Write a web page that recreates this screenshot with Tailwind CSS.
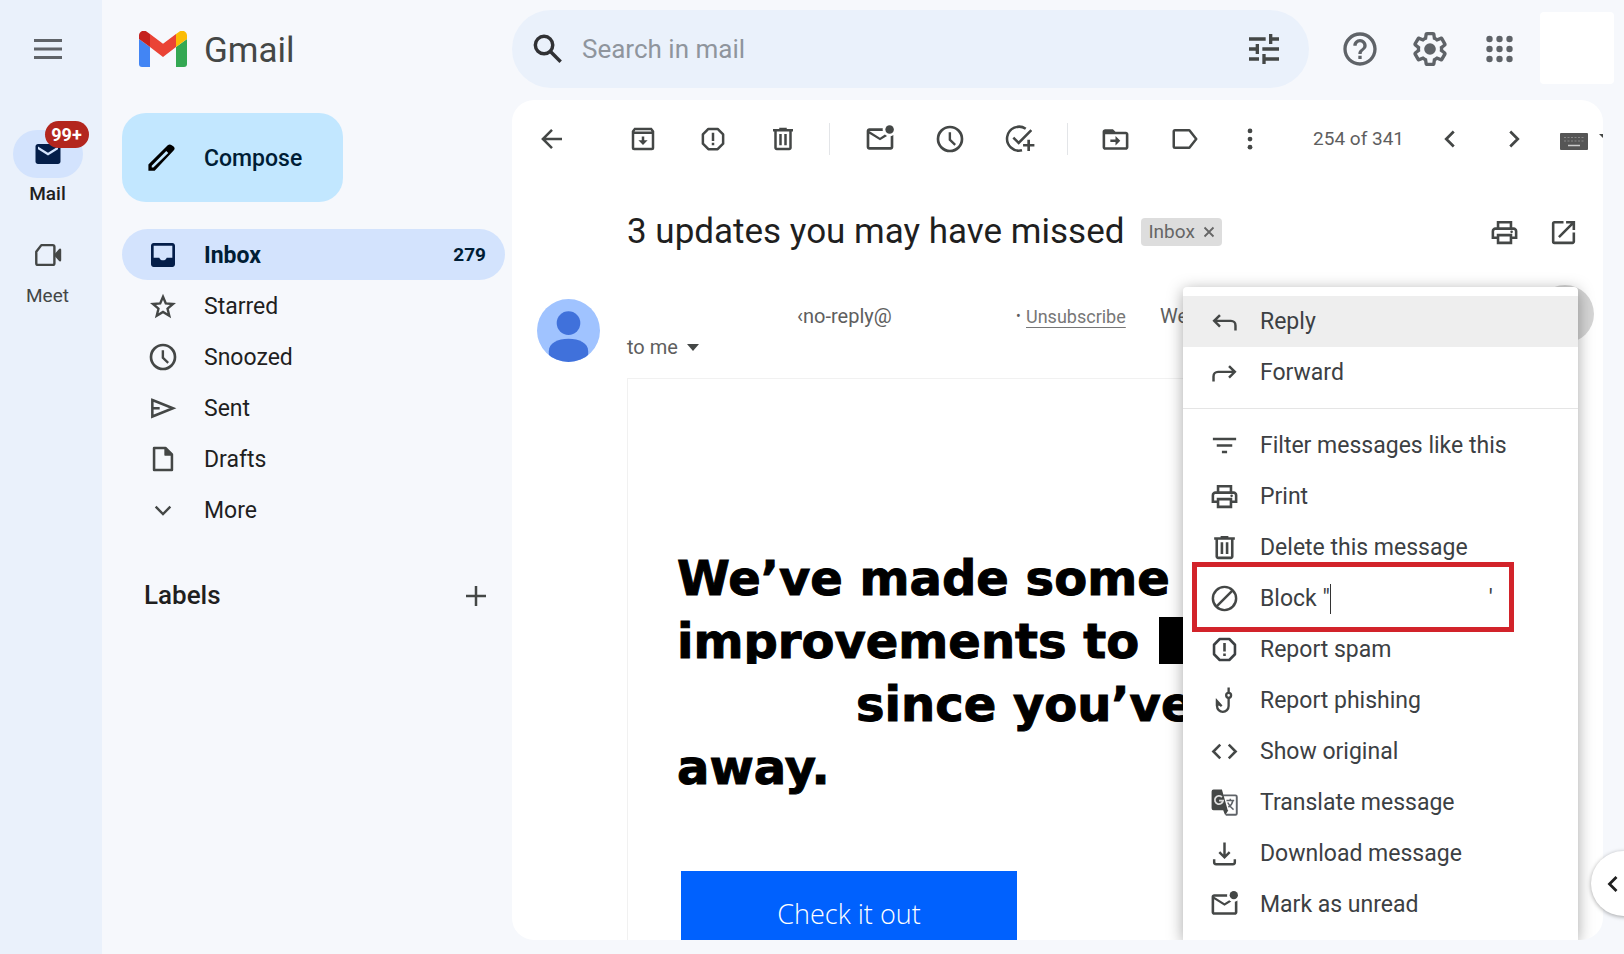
<!DOCTYPE html>
<html lang="en">
<head>
  <meta charset="UTF-8" />
  <meta name="viewport" content="width=device-width, initial-scale=1.0" />
  <title>Gmail</title>
  <script src="https://cdn.jsdelivr.net/npm/@tailwindcss/browser@4"></script>
</head>
<body class="bg-[#f6f8fc] font-['Roboto',sans-serif] text-[#444746]">

  <!-- shared icons -->
  <svg class="hidden">
    <symbol id="unread" viewBox="0 0 24 24"><path d="M22 8.98V18c0 1.1-.9 2-2 2H4c-1.1 0-2-.9-2-2V6c0-1.100.9-2 2-2h10.100A5 5 0 0 0 14.100 6H4l8 5 3.670-2.290c.47.43 1.020.76 1.630.98L12 13 4 8v10h16V9.900c.74-.15 1.420-.48 2-.92z"/><circle cx="19.200" cy="4.800" r="3.200"/></symbol>
    <symbol id="clock" viewBox="0 0 24 24"><path d="M12 2a10 10 0 1 0 0 20 10 10 0 0 0 0-20zm0 18a8 8 0 1 1 0-16 8 8 0 0 1 0 16zM12.800 7H11v6l4.300 4 1.200-1.300-3.700-3.500z"/></symbol>
    <symbol id="spam" viewBox="0 0 24 24"><path d="M8.300 3.900h7.400l4.400 4.400v7.400l-4.400 4.400H8.300l-4.400-4.400V8.300z" fill="none" stroke="currentColor" stroke-width="2" stroke-linejoin="round"/><path d="M11 7h2v6.500h-2zM11 15h2v2h-2z"/></symbol>
    <symbol id="trash" viewBox="0 0 24 24"><path d="M15 4V3H9v1H4v2h1v13c0 1.100.9 2 2 2h10c1.100 0 2-.9 2-2V6h1V4h-5zm2 15H7V6h10v13zM9 8h2v9H9zm4 0h2v9h-2z"/></symbol>
    <symbol id="print" viewBox="0 0 24 24"><path d="M19 8h-1V3H6v5H5c-1.660 0-3 1.340-3 3v6h4v4h12v-4h4v-6c0-1.660-1.340-3-3-3zM8 5h8v3H8V5zm8 14H8v-4h8v4zm2-4v-2H6v2H4v-4c0-.55.45-1 1-1h14c.55 0 1 .45 1 1v4h-2z"/><circle cx="17.500" cy="11.500" r="1"/></symbol>
  </svg>

  <div class="flex h-screen overflow-hidden relative">

    <nav class="w-[102px] shrink-0 bg-[#eaf1fb] flex flex-col items-center pr-[7px]" aria-label="Apps">
      <button class="h-[98px] flex items-center" aria-label="Main menu">
        <svg class="w-7 h-5" viewBox="0 0 28 20" fill="#5f6368"><path d="M0 0h28v3H0zM0 8.500h28v3H0zM0 17h28v3H0z"/></svg>
      </button>
      <a href="#mail" class="mt-8 relative flex flex-col items-center text-[#1f1f1f] text-[19px] font-medium leading-8">
        <span class="w-[70px] h-12 rounded-full bg-[#d3e3fd] flex items-center justify-center">
          <svg class="w-[30px] h-[30px]" viewBox="0 0 24 24" fill="#041e49"><path d="M20 4H4c-1.100 0-2 .9-2 2v12c0 1.100.9 2 2 2h16c1.100 0 2-.9 2-2V6c0-1.100-.9-2-2-2zm0 4.200-8 5-8-5V6l8 5 8-5z"/></svg>
        </span>
        <span class="absolute left-8 -top-[9px] h-[27px] w-11 rounded-full bg-[#b3261e] text-white text-[18px] font-bold leading-[27px] text-center">99+</span>
        Mail
      </a>
      <a href="#meet" class="mt-[29px] flex flex-col items-center text-[19px] leading-8">
        <svg class="w-[32px] h-[32px] mb-[9px]" viewBox="0 0 24 24" fill="none" stroke="#444746" stroke-width="1.800" stroke-linejoin="round"><path d="M3.200 9.500 7 4.600h8.500a1.300 1.300 0 0 1 1.300 1.300v12.200a1.300 1.300 0 0 1-1.300 1.300h-11a1.300 1.300 0 0 1-1.300-1.300z"/><path d="m17.500 12 3.500-4v8z" fill="#444746"/></svg>
        <span>Meet</span>
      </a>
    </nav>

    <aside class="w-[410px] shrink-0 pl-5 pr-[7px]">
      <div class="h-[98px] flex items-center pl-[17px]">
        <svg class="w-12 h-9" viewBox="0 0 48 36"><path fill="#4285f4" d="M0 8v25a3 3 0 0 0 3 3h8V16z"/><path fill="#34a853" d="M37 16v20h8a3 3 0 0 0 3-3V8z"/><path fill="#ea4335" d="M11 16V3l13 9.800L37 3v13L24 26z"/><path fill="#fbbc04" d="M37 3v13l11-8V4.500C48 .5 43.500-1.700 40.200.7z"/><path fill="#c5221f" d="M11 3v13L0 8V4.500C0 .5 4.500-1.700 7.800.7z"/></svg>
        <span class="ml-[17px] pt-1 text-[35px] text-[#444746]">Gmail</span>
      </div>
      <button class="mt-[15px] w-[221px] h-[89px] rounded-[24px] bg-[#c2e7ff] flex items-center pl-6 text-[23px] font-medium text-[#001d35]">
        <svg class="w-8 h-8" viewBox="0 0 24 24" fill="#000"><path fill-rule="evenodd" d="M20.700 3.300a2.200 2.200 0 0 1 0 3.100L6.500 21.500H1.800v-4.700L16.300 2.500a2.200 2.200 0 0 1 3 0zM4.300 17.900v1.200h1.200L16.700 8.200l-1.500-1.500z"/></svg>
        <span class="ml-[26px] pt-1">Compose</span>
      </button>

      <nav class="mt-[27px] text-[23px] text-[#1f1f1f]" aria-label="Folders">
        <a href="#inbox" class="h-[51px] rounded-full bg-[#d3e3fd] flex items-center pl-[25px] pr-[19px] font-bold text-[#001d35]">
          <svg class="w-8 h-8" viewBox="0 0 24 24" fill="#041e49"><path d="M19 3H5c-1.100 0-2 .9-2 2v14c0 1.100.9 2 2 2h14c1.100 0 2-.9 2-2V5c0-1.100-.9-2-2-2zm0 11h-4.200c-.4 1.200-1.500 2-2.800 2s-2.400-.8-2.800-2H5V5h14z"/></svg>
          <span class="ml-[25px] pt-[3px]">Inbox</span>
          <span class="ml-auto pt-px text-[19px]">279</span>
        </a>
        <a href="#starred" class="h-[51px] flex items-center pl-[25px]">
          <svg class="w-8 h-8" viewBox="0 0 24 24" fill="none" stroke="#444746" stroke-width="1.800"><path d="m12 5.100 2.100 5 5.400.4-4.100 3.500 1.300 5.300-4.700-2.900-4.700 2.900 1.300-5.300-4.100-3.500 5.400-.4z"/></svg>
          <span class="ml-[25px] pt-[3px]">Starred</span>
        </a>
        <a href="#snoozed" class="h-[51px] flex items-center pl-[25px]">
          <svg class="w-8 h-8" fill="#444746"><use href="#clock"/></svg>
          <span class="ml-[25px] pt-[3px]">Snoozed</span>
        </a>
        <a href="#sent" class="h-[51px] flex items-center pl-[25px]">
          <svg class="w-8 h-8" viewBox="0 0 24 24" fill="none" stroke="#444746" stroke-width="1.900"><path d="M4 6 19.500 12.200 4 18.400z"/><path d="M4 12.200h5.500"/></svg>
          <span class="ml-[25px] pt-[3px]">Sent</span>
        </a>
        <a href="#drafts" class="h-[51px] flex items-center pl-[25px]">
          <svg class="w-8 h-8" viewBox="0 0 24 24" fill="none" stroke="#444746" stroke-width="1.900" stroke-linejoin="round"><path d="M5.300 3.700h8.500l4.900 4.900v11.700H5.300z"/><path d="M13.500 4v5h5z" fill="#444746" stroke-width="1"/></svg>
          <span class="ml-[25px] pt-[3px]">Drafts</span>
        </a>
        <button class="h-[51px] flex items-center pl-[25px]">
          <svg class="w-8 h-8" viewBox="0 0 24 24" fill="none" stroke="#444746" stroke-width="1.800"><path d="m6.500 9.500 5.500 5.500 5.500-5.500"/></svg>
          <span class="ml-[25px] pt-[3px]">More</span>
        </button>
      </nav>

      <div class="mt-[41px] flex items-center justify-between pl-[22px] pr-[13px]">
        <h2 class="text-[26px] font-medium text-[#1f1f1f]">Labels</h2>
        <button aria-label="Create new label">
          <svg class="w-8 h-8" viewBox="0 0 32 32" fill="none" stroke="#444746" stroke-width="2.500"><path d="M16 6v20M6 16h20"/></svg>
        </button>
      </div>
    </aside>

    <div class="flex-1 min-w-0 flex flex-col">
      <header class="h-[100px] shrink-0 flex items-start pt-[10px] pr-[10px]">
        <form class="flex-1 h-[78px] rounded-full bg-[#eaf1fb] flex items-center pl-[17px] pr-[25px]">
          <button type="button" aria-label="Search">
            <svg class="w-[38px] h-[38px]" viewBox="0 0 24 24" fill="none" stroke="#303134" stroke-width="2.200"><circle cx="9.500" cy="9.500" r="5.500"/><path d="m13.700 13.700 6.300 6.300"/></svg>
          </button>
          <input type="text" aria-label="Search in mail" placeholder="Search in mail" class="ml-[15px] flex-1 min-w-0 bg-transparent text-[26px] outline-none placeholder:text-[#8f959d]" />
          <button type="button" aria-label="Show search options">
            <svg class="w-10 h-10" viewBox="0 0 24 24" fill="#444746"><path d="M3 17v2h6v-2H3zM3 5v2h10V5H3zm10 16v-2h8v-2h-8v-2h-2v6h2zM7 9v2H3v2h4v2h2V9H7zm14 4v-2H11v2h10zm-6-4h2V7h4V5h-4V3h-2v6z"/></svg>
          </button>
        </form>
        <div class="ml-4 h-[78px] flex items-center">
          <button class="w-[70px] flex justify-center" aria-label="Support">
            <svg class="w-10 h-10" viewBox="0 0 24 24" fill="#5f6368"><path d="M11 18h2v-2h-2v2zm1-16C6.480 2 2 6.480 2 12s4.480 10 10 10 10-4.480 10-10S17.520 2 12 2zm0 18c-4.410 0-8-3.590-8-8s3.590-8 8-8 8 3.590 8 8-3.590 8-8 8zm0-14c-2.210 0-4 1.790-4 4h2c0-1.100.9-2 2-2s2 .9 2 2c0 2-3 1.750-3 5h2c0-2.250 3-2.500 3-5 0-2.210-1.790-4-4-4z"/></svg>
          </button>
          <button class="w-[70px] flex justify-center" aria-label="Settings">
            <svg class="w-10 h-10" viewBox="0 0 24 24" fill="#5f6368"><path d="M13.850 22.250h-3.700c-.74 0-1.360-.54-1.450-1.270l-.27-1.890c-.27-.14-.53-.29-.79-.46l-1.800.72c-.7.26-1.470-.03-1.810-.65L2.200 15.530c-.35-.66-.2-1.440.36-1.880l1.530-1.190c-.01-.15-.02-.3-.02-.46 0-.15.01-.31.02-.46l-1.520-1.190c-.59-.45-.74-1.260-.37-1.880l1.850-3.190c.34-.62 1.110-.9 1.790-.63l1.810.73c.26-.17.52-.32.78-.46l.27-1.910c.09-.7.71-1.250 1.440-1.250h3.700c.74 0 1.360.54 1.450 1.270l.27 1.890c.27.14.53.29.79.46l1.800-.72c.71-.26 1.480.03 1.820.65l1.840 3.180c.36.66.2 1.440-.36 1.880l-1.520 1.190c.01.15.02.3.02.46s-.01.31-.02.46l1.520 1.190c.56.45.72 1.230.37 1.860l-1.860 3.220c-.34.620-1.110.9-1.800.630l-1.800-.72c-.26.170-.52.320-.78.460l-.27 1.910c-.1.680-.72 1.220-1.460 1.220zm-3.230-2h2.760l.37-2.550.53-.22c.44-.18.880-.44 1.340-.78l.45-.34 2.380.96 1.380-2.400-2.030-1.580.070-.56c.03-.26.06-.51.06-.78s-.03-.53-.06-.78l-.07-.56 2.030-1.580-1.390-2.400-2.390.96-.45-.35c-.42-.32-.87-.58-1.330-.77l-.52-.22-.37-2.550h-2.760l-.37 2.550-.53.210c-.44.190-.88.440-1.340.790l-.45.330-2.380-.95-1.390 2.390 2.030 1.580-.07.560a7 7 0 0 0-.06.790c0 .26.020.530.060.780l.07.560-2.030 1.580 1.380 2.400 2.390-.96.45.350c.43.330.860.580 1.330.770l.53.220.38 2.550z"/><circle cx="12" cy="12" r="3.500"/></svg>
          </button>
          <button class="w-[70px] flex justify-center" aria-label="Google apps">
            <svg class="w-10 h-10" viewBox="0 0 40 40" fill="#5f6368"><circle cx="9.500" cy="10" r="3.200"/><circle cx="19.500" cy="10" r="3.200"/><circle cx="29.500" cy="10" r="3.200"/><circle cx="9.500" cy="20" r="3.200"/><circle cx="19.500" cy="20" r="3.200"/><circle cx="29.500" cy="20" r="3.200"/><circle cx="9.500" cy="30" r="3.200"/><circle cx="19.500" cy="30" r="3.200"/><circle cx="29.500" cy="30" r="3.200"/></svg>
          </button>
        </div>
        <div class="ml-[5px] mt-[2px] w-[74px] h-[72px] rounded-sm bg-white"></div>
      </header>

      <main class="relative flex-1 min-h-0 mr-[21px] mb-[14px] rounded-[22px] bg-white overflow-hidden">

        <!-- toolbar -->
        <div class="h-[78px] flex items-center">
          <button class="w-20 flex justify-center mr-4" aria-label="Back to Inbox">
            <svg class="w-[30px] h-[30px]" viewBox="0 0 24 24" fill="none" stroke="#444746" stroke-width="2"><path d="M20 12H5.500M12 4.700 4.700 12l7.300 7.300"/></svg>
          </button>
          <button class="w-[70px] flex justify-center" aria-label="Archive">
            <svg class="w-[30px] h-[30px]" viewBox="0 0 24 24" fill="#444746"><path fill-rule="evenodd" d="M5 3h14l2 2.500V19a2 2 0 0 1-2 2H5a2 2 0 0 1-2-2V5.500zM5 8v11h14V8zM5.800 5l-.6 1h13.600l-.6-1z"/><path d="M11 10h2v3h2.700L12 16.700 8.300 13H11z"/></svg>
          </button>
          <button class="w-[70px] flex justify-center" aria-label="Report spam"><svg class="w-[30px] h-[30px]" fill="#444746"><use href="#spam"/></svg></button>
          <button class="w-[70px] flex justify-center" aria-label="Delete"><svg class="w-[30px] h-[30px]" fill="#444746"><use href="#trash"/></svg></button>
          <div class="ml-[11px] mr-[15px] w-px h-8 bg-[#e3e5e8]"></div>
          <button class="w-[70px] flex justify-center" aria-label="Mark as unread"><svg class="w-[32px] h-[32px]" fill="#444746"><use href="#unread"/></svg></button>
          <button class="w-[70px] flex justify-center" aria-label="Snooze"><svg class="w-[32px] h-[32px]" fill="#444746"><use href="#clock"/></svg></button>
          <button class="w-[70px] flex justify-center" aria-label="Add to Tasks">
            <svg class="w-[32px] h-[32px]" viewBox="0 0 24 24" fill="none" stroke="#444746" stroke-width="1.900"><path d="M16.300 4.300A9 9 0 1 0 13.500 20.500"/><path d="m7 11 4 4L20.500 5.300"/><path d="M18.500 12.500v8.500M14.300 16.700h8.500" stroke-width="2"/></svg>
          </button>
          <div class="mx-3 w-px h-8 bg-[#e3e5e8]"></div>
          <button class="w-[70px] flex justify-center" aria-label="Move to">
            <svg class="w-[31px] h-[31px]" viewBox="0 0 24 24" fill="#444746"><path fill-rule="evenodd" d="M20 6h-8l-2-2H4c-1.100 0-2 .9-2 2v12c0 1.100.9 2 2 2h16c1.100 0 2-.9 2-2V8c0-1.100-.9-2-2-2zm0 12H4V8h16z"/><path d="M12 9.300 15.700 13 12 16.700V14H8v-2h4z"/></svg>
          </button>
          <button class="w-[70px] flex justify-center" aria-label="Labels">
            <svg class="w-[30px] h-[30px]" viewBox="0 0 24 24" fill="none" stroke="#444746" stroke-width="2" stroke-linejoin="round"><path d="M4 5h11.500l5.500 7-5.500 7H4a1 1 0 0 1-1-1V6a1 1 0 0 1 1-1z"/></svg>
          </button>
          <button class="w-[60px] flex justify-center" aria-label="More">
            <svg class="w-[30px] h-[30px]" viewBox="0 0 24 24" fill="#444746"><circle cx="12" cy="5.500" r="1.900"/><circle cx="12" cy="12" r="1.900"/><circle cx="12" cy="18.500" r="1.900"/></svg>
          </button>
          <span class="ml-auto mr-[14px] text-[19px] text-[#5e5e5e] whitespace-nowrap">254 of 341</span>
          <button class="w-16 flex justify-center" aria-label="Newer">
            <svg class="w-[30px] h-[30px]" viewBox="0 0 24 24" fill="none" stroke="#444746" stroke-width="2.200"><path d="m15 6-6 6 6 6"/></svg>
          </button>
          <button class="w-16 flex justify-center" aria-label="Older">
            <svg class="w-[30px] h-[30px]" viewBox="0 0 24 24" fill="none" stroke="#444746" stroke-width="2.200"><path d="m9 6 6 6-6 6"/></svg>
          </button>
          <button class="w-[57px] pl-[14px] overflow-hidden" aria-label="Select input tool">
            <svg class="w-[50px] h-[22px] mt-1" viewBox="0 0 50 22" fill="#555"><rect y="3" width="28" height="17" rx="1"/><path d="M4 7.500h20M4 11h20" stroke="#888" stroke-width="1.200" stroke-dasharray="2 1.500"/><path d="M8 15.500h12" stroke="#ccc" stroke-width="1.300"/><path d="M39 4h10l-5 5z" fill="#444746"/></svg>
          </button>
        </div>

        <!-- subject -->
        <div class="h-[106px] pt-[2px] flex items-center pl-[115px] pr-[10px]">
          <h1 class="text-[35px] text-[#1f1f1f] whitespace-nowrap">3 updates you may have missed</h1>
          <button class="ml-[17px] h-7 px-[7px] rounded bg-[#ddd] text-[19px] text-[#666] flex items-center gap-2" aria-label="Remove label Inbox">
            Inbox
            <svg class="w-3 h-3" viewBox="0 0 12 12" stroke="#666" stroke-width="1.800"><path d="m1.500 1.500 9 9M10.500 1.500l-9 9"/></svg>
          </button>
          <button class="ml-auto w-[59px] flex justify-center" aria-label="Print all"><svg class="w-[31px] h-[31px]" fill="#444746"><use href="#print"/></svg></button>
          <button class="w-[59px] flex justify-center" aria-label="In new window">
            <svg class="w-[31px] h-[31px]" viewBox="0 0 24 24" fill="#444746"><path d="M19 19H5V5h7V3H5a2 2 0 0 0-2 2v14a2 2 0 0 0 2 2h14c1.100 0 2-.9 2-2v-7h-2v7zM14 3v2h3.590l-9.830 9.830 1.410 1.410L19 6.410V10h2V3h-7z"/></svg>
          </button>
        </div>

        <!-- sender -->
        <div class="h-[94px] flex items-start pt-[15px] pl-[25px] text-[20px] text-[#5e5e5e]">
          <svg class="w-[63px] h-[63px] shrink-0" viewBox="0 0 64 64"><defs><clipPath id="face"><circle cx="32" cy="32" r="32"/></clipPath></defs><g clip-path="url(#face)"><path fill="#a0c3ff" d="M0 0h64v64H0z"/><circle cx="32" cy="24.500" r="12" fill="#4071db"/><path fill="#4071db" d="M12 64V53c0-8 9-12.500 20-12.500S52 45 52 53v11z"/></g></svg>
          <div class="ml-[27px] pt-[2px] leading-[31px] whitespace-nowrap">
            <div class="flex pl-[170px]">
              <span class="w-[219px]">‹no-reply@</span>
              <span class="w-[10px] text-[14px]">•</span>
              <a href="#unsubscribe" class="w-[134px] text-[18px] text-[#777] underline underline-offset-4">Unsubscribe</a>
              <span>We</span>
            </div>
            <button class="flex items-center gap-[9px]">to me
              <svg class="w-3 h-[7px]" viewBox="0 0 12 7" fill="#444746"><path d="M0 0h12L6 7z"/></svg>
            </button>
          </div>
        </div>

        <!-- message body -->
        <div class="ml-[115px] mr-[30px] border-l border-t border-[#f1f1f1] pl-[49px] pt-[168px]">
          <div class="text-[48px] leading-[63px] font-bold font-['DejaVu_Sans',sans-serif] text-black whitespace-nowrap [-webkit-text-stroke:1px_black]">
            <p>We’ve made some</p>
            <div class="h-[54px] mb-[9px] overflow-hidden flex items-end gap-5">
              <p class="h-[54px]">improvements to</p>
              <span class="w-20 h-[47px] bg-black"></span>
            </div>
            <p class="pl-[179px]">since you’ve</p>
            <p>away.</p>
          </div>
          <a href="#check" class="mt-[72px] ml-1 w-[336px] h-[86px] bg-[#0061fe] text-white text-[27px] font-light font-['Open_Sans',sans-serif] flex items-center justify-center">Check it out</a>
        </div>

        <!-- message menu -->
        <span class="absolute right-[9px] top-[185px] w-[58px] h-[58px] rounded-full bg-[#d5d5d5]"></span>
        <div class="absolute right-[25px] top-[187px] bottom-0 w-[395px] pt-[9px] rounded-t-sm bg-white shadow-[0_3px_16px_rgba(0,0,0,0.35)] text-[23px] leading-[51px] text-[#3c4043]" role="menu">
          <button role="menuitem" class="w-full h-[51px] flex items-center gap-5 pl-[26px] bg-[#eee]">
            <svg class="w-[31px] h-[31px]" viewBox="0 0 24 24" fill="none" stroke="#444746" stroke-width="1.900"><path d="M8.500 7 4 11.500 8.500 16M4 11.500h13a3.500 3.500 0 0 1 3.500 3.500v4"/></svg>
            Reply
          </button>
          <button role="menuitem" class="w-full h-[51px] flex items-center gap-5 pl-[26px]">
            <svg class="w-[31px] h-[31px]" viewBox="0 0 24 24" fill="none" stroke="#444746" stroke-width="1.900"><path d="m15.500 7 4.500 4.500-4.500 4.500M20 11.500H7A3.500 3.500 0 0 0 3.500 15v4"/></svg>
            Forward
          </button>
          <hr class="mt-[10px] mb-[11px] border-[#e5e5e5]" />
          <button role="menuitem" class="w-full h-[51px] flex items-center gap-5 pl-[26px]">
            <svg class="w-[31px] h-[31px]" viewBox="0 0 24 24" fill="#444746"><path d="M10 18h4v-2h-4v2zM3 6v2h18V6H3zm3 7h12v-2H6v2z"/></svg>
            Filter messages like this
          </button>
          <button role="menuitem" class="w-full h-[51px] flex items-center gap-5 pl-[26px]">
            <svg class="w-[31px] h-[31px]" fill="#444746"><use href="#print"/></svg>
            Print
          </button>
          <button role="menuitem" class="w-full h-[51px] flex items-center gap-5 pl-[26px]">
            <svg class="w-[31px] h-[31px]" fill="#444746"><use href="#trash"/></svg>
            Delete this message
          </button>
          <button role="menuitem" class="relative w-full h-[51px] flex items-center gap-5 pl-[26px]">
            <svg class="w-[31px] h-[31px]" viewBox="0 0 24 24" fill="none" stroke="#444746" stroke-width="1.900"><circle cx="12" cy="12" r="9"/><path d="M5.700 18.300 18.300 5.700"/></svg>
            <span class="flex items-center">Block "<span class="w-px h-[30px] bg-[#333]"></span><span class="ml-[158px]">'</span></span>
            <span class="absolute left-[9px] -top-[11px] w-[322px] h-[70px] border-5 border-[#d2232a]"></span>
          </button>
          <button role="menuitem" class="w-full h-[51px] flex items-center gap-5 pl-[26px]">
            <svg class="w-[31px] h-[31px]" fill="#444746"><use href="#spam"/></svg>
            Report spam
          </button>
          <button role="menuitem" class="w-full h-[51px] flex items-center gap-5 pl-[26px]">
            <svg class="w-[31px] h-[31px]" viewBox="0 0 24 24" fill="none" stroke="#444746" stroke-width="1.800"><circle cx="15.200" cy="8" r="1.900"/><path d="M15.200 2V6M15.200 10v6.300a4.500 4.500 0 0 1-9 0V12.500l3.600 4"/><path d="M5.300 11v5h4.800z" fill="#444746" stroke="none"/></svg>
            Report phishing
          </button>
          <button role="menuitem" class="w-full h-[51px] flex items-center gap-5 pl-[26px]">
            <svg class="w-[31px] h-[31px]" viewBox="0 0 24 24" fill="none" stroke="#444746" stroke-width="2"><path d="M8.700 6.700 3.400 12l5.300 5.300M15.300 6.700l5.300 5.300-5.300 5.300"/></svg>
            Show original
          </button>
          <button role="menuitem" class="w-full h-[51px] flex items-center gap-5 pl-[26px]">
            <svg class="w-[31px] h-[31px]" viewBox="0 0 24 24"><path d="M11 6.500h9.500a1 1 0 0 1 1 1v13a1 1 0 0 1-1 1H13" fill="none" stroke="#5f6368" stroke-width="1.500"/><path d="M3.500 2H10l4.500 16H3.500A1.500 1.500 0 0 1 2 16.500v-13A1.500 1.500 0 0 1 3.500 2zM11 18h4l-2.500 3.800z" fill="#444746"/><path d="M10 7.800a3.200 3.200 0 1 0 .9 2.700H7.800" fill="none" stroke="#ddd" stroke-width="1.400"/><path d="M13.500 10.500h6M16.500 9v1.500M18.500 10.500c-.5 2.500-2 4.200-3.500 5M14.500 12c1 2 2.500 4 4.500 5.500" fill="none" stroke="#5f6368" stroke-width="1.200"/></svg>
            Translate message
          </button>
          <button role="menuitem" class="w-full h-[51px] flex items-center gap-5 pl-[26px]">
            <svg class="w-[31px] h-[31px]" viewBox="0 0 24 24" fill="none" stroke="#444746" stroke-width="1.900"><path d="M12 3.500v11M8 11l4 4 4-4M4 16.500v2.300a1.500 1.500 0 0 0 1.500 1.500h13a1.500 1.500 0 0 0 1.500-1.500v-2.300"/></svg>
            Download message
          </button>
          <button role="menuitem" class="w-full h-[51px] flex items-center gap-5 pl-[26px]">
            <svg class="w-[31px] h-[31px]" fill="#444746"><use href="#unread"/></svg>
            Mark as unread
          </button>
        </div>
      </main>
    </div>

    <!-- side panel toggle -->
    <button class="absolute -right-8 bottom-[38px] w-[65px] h-[65px] rounded-full bg-white shadow-[0_1px_4px_rgba(0,0,0,0.35)] pl-2" aria-label="Show side panel">
      <svg class="w-[28px] h-[28px]" viewBox="0 0 24 24" fill="none" stroke="#1f1f1f" stroke-width="2.400"><path d="m15 6-6 6 6 6"/></svg>
    </button>
  </div>
</body>
</html>
